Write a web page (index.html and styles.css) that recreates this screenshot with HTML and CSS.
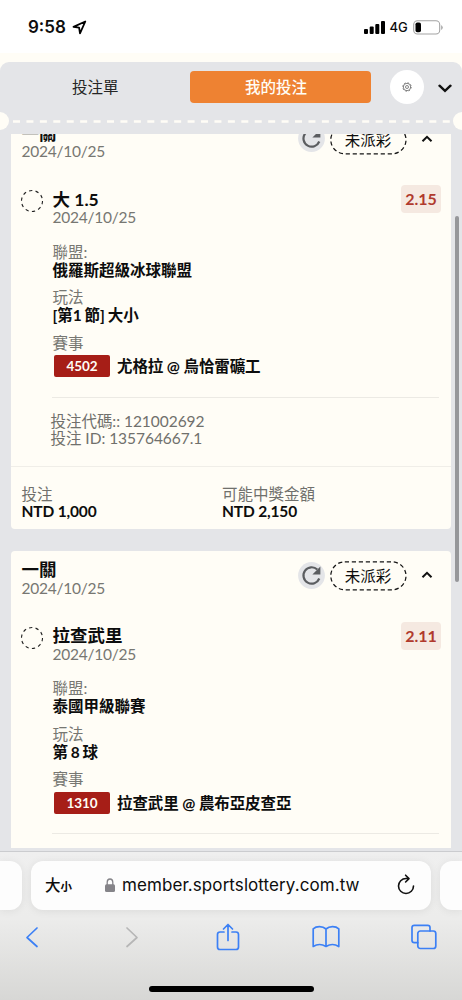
FILE: index.html
```
<!DOCTYPE html>
<html lang="zh-Hant">
<head>
<meta charset="utf-8">
<title>我的投注</title>
<link rel="stylesheet" href="styles.css">
</head>
<body>
<svg class="defs" width="0" height="0">
  <symbol id="reload" viewBox="0 0 27 27"><circle cx="13.5" cy="13.5" r="13.4" fill="#e4e5e8"/><path d="M21.300 16.500A8.200 8.200 0 1 1 19.300 7.500" fill="none" stroke="#5b5d60" stroke-width="2.200"/><path d="M22.400 4.600v7.900h-8z" fill="#5b5d60"/></symbol>
  <symbol id="pill" viewBox="0 0 77 30"><rect x=".8" y=".8" width="75.2" height="28" rx="14" fill="none" stroke="#151515" stroke-width="1.25" stroke-dasharray="4.2 2.8"/></symbol>
  <symbol id="up" viewBox="0 0 12 8"><path d="M1.5 6.3 6 1.8l4.500 4.500" fill="none" stroke="#111" stroke-width="2"/></symbol>
  <symbol id="ring" viewBox="0 0 24 24"><circle cx="12" cy="12" r="10.500" fill="none" stroke="#222" stroke-width="1.1" stroke-dasharray="3.300 3.298"/></symbol>
</svg>
<header class="status">
  <span class="time">9:58</span>
  <svg class="loc" width="15" height="15" viewBox="0 0 15 15"><path d="M13.300 1.500 1.500 6.900l5.600.8.900 5.700z" fill="none" stroke="#000" stroke-width="1.800" stroke-linejoin="round"/></svg>
  <svg class="signal" width="21" height="13" viewBox="0 0 21 13"><rect y="8" width="4" height="5" rx="1"/><rect x="5.700" y="5.500" width="4" height="7.500" rx="1"/><rect x="11.300" y="3" width="4" height="10" rx="1"/><rect x="17" width="4" height="13" rx="1"/></svg>
  <span class="net">4G</span>
  <svg class="battery" width="30" height="15" viewBox="0 0 30 15"><rect x=".7" y=".7" width="26" height="13.300" rx="3.800" fill="none" stroke="#a3a3a3" stroke-width="1.100"/><rect x="2.500" y="2.500" width="5.500" height="9.700" rx="1.800"/><path d="M28.200 5v5q1.500-1 1.500-2.500T28.200 5z" fill="#a3a3a3"/></svg>
</header>
<main class="page">
  <section class="panel">
    <nav class="tabs">
      <span class="tab">投注單</span>
      <span class="tab active">我的投注</span>
      <span class="gear"><svg width="10" height="10" viewBox="0 0 10 10" fill="none" stroke="#555" stroke-width=".7"><circle cx="5" cy="5" r="1.500"/><circle cx="5" cy="5" r="3.700"/><circle cx="5" cy="5" r="4.300" stroke-dasharray="1.500 1.877"/></svg></span>
      <svg class="down" width="14" height="9" viewBox="0 0 14 9"><path d="M1.500 1.700 7 6.900l5.500-5.200" fill="none" stroke="#111" stroke-width="2.400" stroke-linecap="round"/></svg>
    </nav>
    <div class="perf"><i class="notch"></i><svg width="462" height="3"><path d="M13 1.500H450" stroke="#fffdf6" stroke-width="2.600" stroke-dasharray="7 6.430"/></svg><i class="notch right"></i></div>
    <div class="viewport">
      <div class="list">
        <article class="card">
          <div class="head">
            <div class="headtext"><h2>一關</h2><time>2024/10/25</time></div>
            <svg class="reload"><use href="#reload"/></svg>
            <span class="pill"><svg><use href="#pill"/></svg><b>未派彩</b></span>
            <svg class="up"><use href="#up"/></svg>
          </div>
          <div class="bet">
            <svg class="ring"><use href="#ring"/></svg>
            <div class="pick"><h3>大 1.5</h3><time>2024/10/25</time></div>
            <span class="odds">2.15</span>
          </div>
          <dl>
            <dt>聯盟:</dt><dd>俄羅斯超級冰球聯盟</dd>
            <dt>玩法</dt><dd class="play">[第1 節] 大小</dd>
            <dt>賽事</dt><dd class="match"><span class="code">4502</span><span>尤格拉 @ 烏恰雷礦工</span></dd>
          </dl>
          <div class="ids"><p>投注代碼:: 121002692</p><p>投注 ID: 135764667.1</p></div>
          <footer class="sums">
            <div><p>投注</p><strong>NTD 1,000</strong></div>
            <div><p>可能中獎金額</p><strong>NTD 2,150</strong></div>
          </footer>
        </article>
        <article class="card">
          <div class="head">
            <div class="headtext"><h2>一關</h2><time>2024/10/25</time></div>
            <svg class="reload"><use href="#reload"/></svg>
            <span class="pill"><svg><use href="#pill"/></svg><b>未派彩</b></span>
            <svg class="up"><use href="#up"/></svg>
          </div>
          <div class="bet">
            <svg class="ring"><use href="#ring"/></svg>
            <div class="pick"><h3>拉查武里</h3><time>2024/10/25</time></div>
            <span class="odds">2.11</span>
          </div>
          <dl>
            <dt>聯盟:</dt><dd>泰國甲級聯賽</dd>
            <dt>玩法</dt><dd class="play">第 8 球</dd>
            <dt>賽事</dt><dd class="match"><span class="code">1310</span><span>拉查武里 @ 農布亞皮查亞</span></dd>
          </dl>
          <div class="ids"></div>
        </article>
      </div>
    </div>
    <i class="scroll"></i>
  </section>
</main>
<footer class="browser">
  <div class="urls">
    <div class="side left"></div>
    <div class="url">
      <span class="aa">大<small>小</small></span>
      <svg class="lock" width="10" height="14" viewBox="0 0 10 14"><path d="M2.200 7V4.200a2.800 3.200 0 0 1 5.600 0V7" fill="none" stroke="#858489" stroke-width="1.300"/><rect y="6.200" width="10" height="7.800" rx="1.500" fill="#858489"/></svg>
      <span class="host">member.sportslottery.com.tw</span>
      <svg class="refresh" width="18" height="21" viewBox="0 0 18 21" fill="none" stroke="#111" stroke-width="1.600" stroke-linecap="round" stroke-linejoin="round"><path d="M11 4.500H9A7.500 7.500 0 1 0 16.500 12M8.600 1.200 12 4.600 8.600 8"/></svg>
    </div>
    <div class="side"></div>
  </div>
  <div class="tools">
    <svg width="14" height="22" viewBox="0 0 14 22"><path d="M12 2 2 11.500 12 20.500"/></svg>
    <svg class="off" width="14" height="22" viewBox="0 0 14 22"><path d="M2 2 12 11.500 2 20.500"/></svg>
    <svg width="24" height="28" viewBox="0 0 24 28"><path d="M8 9H4Q1.500 9 1.500 11.500V24Q1.500 26.500 4 26.500H20Q22.500 26.500 22.500 24V11.500Q22.500 9 20 9H16M12 17.500V1.800M7.500 6 12 1.500 16.500 6"/></svg>
    <svg width="28" height="24" viewBox="0 0 28 24"><path d="M14 4C10.500.8 4.500.8 1.200 3.800V21.500Q7.500 17.500 14 21.500 20.500 17.500 26.800 21.500V3.800C23.500.8 17.500.8 14 4V21.500"/></svg>
    <svg width="26" height="26" viewBox="0 0 26 26"><rect x="6.800" y="7" width="18" height="17.500" rx="2.500"/><path d="M6.800 18.700H3.300Q1 18.700 1 16.400V3.600Q1 1.300 3.300 1.300H16.700Q19 1.300 19 3.600V7"/></svg>
  </div>
  <div class="home"></div>
</footer>
</body>
</html>
```

FILE: styles.css
```
* { box-sizing: border-box; margin: 0; padding: 0; }
body { width: 462px; height: 1000px; overflow: hidden; display: flex; flex-direction: column; background: #fff; color: #0d0d0d; font: 15.5px/17px Lato, "Noto Sans CJK TC", sans-serif; }
svg { display: block; flex: none; }
.defs { position: absolute; }
.status { height: 53px; padding: 2px 19px 0 28px; display: flex; align-items: center; font-family: Inter, sans-serif; }
.time { width: 39px; font-size: 17px; font-weight: 600; white-space: nowrap; }
.loc { margin-left: 5px; }
.signal { margin-left: auto; }
.net { width: 19px; margin: 0 4.500px 0 5px; font-size: 13px; font-weight: 500; white-space: nowrap; }
.page { height: 798px; padding-top: 9px; background: #fffdf6; }
.panel { position: relative; height: 789px; background: #e4e5e8; border-radius: 9px 9px 0 0; }
.tabs { height: 50px; display: flex; align-items: center; }
.tab { width: 190.500px; height: 32px; line-height: 32px; text-align: center; color: #252525; }
.tab.active { width: 181px; margin-left: -1px; border-radius: 4px; background: #ee8232; color: #fffdf6; font-weight: 500; padding-right: 8px; }
.gear { width: 34px; height: 34px; margin-left: 19.500px; border-radius: 50%; background: #fff; display: grid; place-items: center; }
.down { margin: 2px 0 0 14px; }
.perf { position: relative; height: 22px; padding-top: 8px; overflow: hidden; }
.notch { position: absolute; top: 0; left: -9px; width: 18px; height: 18px; border-radius: 50%; background: #fffdf6; }
.notch.right { left: auto; right: -9px; }
.viewport { height: 714px; overflow: hidden; padding: 0 11px; }
.list { margin-top: -19.5px; display: flex; flex-direction: column; gap: 22px; }
.card { height: 414.5px; flex: none; background: #fffdf6; border-radius: 4px; }
.head { display: flex; height: 74px; padding: 8px 18.500px 0 10.500px; align-items: flex-start; }
.headtext { flex: 1; }
h2 { font-size: 17.500px; line-height: 21px; height: 20.500px; }
time { display: block; color: #777772; letter-spacing: -.25px; }
.reload { width: 27px; height: 27px; margin-top: 2.500px; }
.pill { position: relative; width: 77px; height: 30px; margin: 2px 14px 0 5px; text-align: center; line-height: 31px; }
.pill svg { position: absolute; inset: 0; width: 77px; height: 30px; }
.pill b { font-weight: 400; }
.up { width: 12px; height: 8px; margin-top: 12px; }
.bet { display: flex; height: 54px; padding: 0 10px 0 9px; align-items: flex-start; }
.ring { width: 24px; height: 24px; margin: .5px 8.500px 0 0; }
.pick { flex: 1; }
h3 { font-size: 17.500px; line-height: 22px; height: 20.500px; }
.odds { width: 40px; height: 28px; margin-top: -3.500px; border-radius: 4px; background: #f5e9e1; color: #b03a2d; font-size: 16px; font-weight: 700; line-height: 28px; text-align: center; }
dl { height: 155px; margin: 0 12px 0 41px; padding: 0 .5px; border-bottom: 1.500px solid #eceae4; line-height: 18px; }
dt { color: #777772; }
dd { height: 19px; margin-bottom: 8.600px; font-weight: 700; }
.play { word-spacing: -1px; }
.match { display: flex; align-items: center; height: 22px; margin: 3.500px 0 0 1.500px; gap: 7px; letter-spacing: -.1px; }
.code { width: 56px; height: 22px; line-height: 22px; border-radius: 2px; background: #a61e17; color: #fffdf6; font-size: 13.500px; text-align: center; }
.ids { height: 69px; padding: 15.500px 0 0 39.500px; color: #70706c; border-bottom: 1.500px solid #f0eee8; letter-spacing: -.04px; }
.sums { padding: 19.500px 10.500px 0; display: grid; grid-template-columns: 200.500px 1fr; }
.sums p { color: #70706c; height: 16.500px; }
.sums strong { display: block; letter-spacing: -.15px; }
.scroll { position: absolute; left: 455px; top: 154px; width: 4px; height: 366px; border-radius: 2px; background: #96979a; }
.browser { height: 149px; border-top: 1px solid #cbcccf; background: linear-gradient(#efefef, #ececeb 45%, #d7d7d5); }
.urls { display: flex; gap: 9px; padding-top: 9px; }
.side { width: 22px; height: 49px; background: #fdfdfd; border-radius: 12px 0 0 12px; box-shadow: 0 1px 8px #00000012; }
.side.left { border-radius: 0 12px 12px 0; }
.url { width: 400px; height: 49px; padding: 0 16px 2px 14px; display: flex; align-items: center; background: #fdfdfd; border-radius: 12px; box-shadow: 0 1px 8px #00000014; }
.aa { width: 60px; padding-top: 2px; font-family: "Noto Sans CJK TC", sans-serif; font-weight: 500; font-size: 15.500px; }
.aa small { font-size: 11.500px; font-weight: 700; }
.lock { margin-top: 1px; }
.host { margin: 0 auto 0 7px; font: 17px/20px Inter, sans-serif; letter-spacing: .08px; white-space: nowrap; }
.tools { display: grid; grid-template-columns: repeat(5, 98px); justify-items: center; align-items: center; width: 490px; height: 56px; margin-left: -17px; padding-bottom: 2px; }
.tools svg { fill: none; stroke: #3c80f5; stroke-width: 1.700; stroke-linecap: round; stroke-linejoin: round; }
.tools .off { stroke: #b6b6b6; margin-left: 4px; }
.home { width: 165px; height: 6px; margin: 20px auto 0; border-radius: 3px; background: #000; }
```
